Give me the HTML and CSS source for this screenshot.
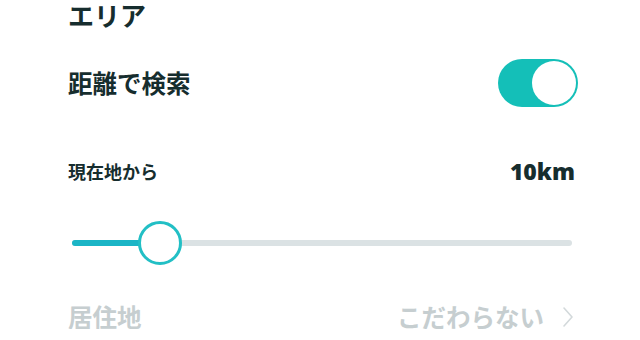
FILE: index.html
```html
<!DOCTYPE html>
<html lang="ja">
<head>
<meta charset="UTF-8" />
<meta name="viewport" content="width=device-width, initial-scale=1" />
<title>エリア</title>
<link rel="stylesheet" href="styles.css">
</head>
<body>
<div class="area">
  <h2 class="area-title">エリア</h2>

  <div class="row row-switch">
    <span class="label">距離で検索</span>
    <div class="toggle is-on" role="switch" aria-checked="true" aria-label="距離で検索">
      <span class="toggle-knob"></span>
    </div>
  </div>

  <div class="row row-distance">
    <span class="label-small">現在地から</span>
    <span class="distance">10km</span>
  </div>

  <div class="slider" aria-label="距離">
    <div class="slider-track">
      <div class="slider-fill" style="width: 17.6%"></div>
      <span class="slider-thumb" style="left: 17.6%"></span>
    </div>
  </div>

  <div class="row row-home">
    <span class="label muted">居住地</span>
    <span class="value muted">こだわらない
      <svg class="chevron" width="12" height="22" viewBox="0 0 12 22" aria-hidden="true">
        <polyline points="2,2 10,11 2,20" fill="none" stroke="#d3d9db" stroke-width="1.6" stroke-linecap="round" stroke-linejoin="round"/>
      </svg>
    </span>
  </div>
</div>
</body>
</html>
```

FILE: styles.css
```css
:root {
  --text-dark: #162d2e;
  --text-muted: #c6ced0;
  --teal: #14bfb8;
  --teal-slider: #1bb5c6;
  --thumb-border: #22bfc5;
  --track-bg: #dbe2e4;
  --font-jp: "Noto Sans CJK JP", "Noto Sans", sans-serif;
}

* {
  box-sizing: border-box;
}

body {
  margin: 0;
  background: #ffffff;
  color: var(--text-dark);
  font-family: var(--font-jp);
}

.area {
  padding: 0 62px 0 68px;
}

.area-title {
  margin: 0;
  font-size: 26px;
  line-height: 30px;
  font-weight: 700;
}

.row {
  display: flex;
  justify-content: space-between;
  align-items: center;
}

.row-switch {
  margin-top: 29px;
  height: 48px;
}

.label {
  font-size: 24.5px;
  line-height: 24px;
  font-weight: 700;
}

.label-small {
  font-size: 18px;
  line-height: 24px;
  font-weight: 700;
}

.toggle {
  width: 80px;
  height: 48px;
  border-radius: 24px;
  background: var(--teal);
  padding: 2px;
  display: flex;
  justify-content: flex-end;
}

.toggle-knob {
  width: 44px;
  height: 44px;
  border-radius: 50%;
  background: #ffffff;
}

.row-distance {
  margin-top: 52px;
  height: 24px;
}

.distance {
  font-family: "Open Sans", "Liberation Sans", sans-serif;
  font-size: 23px;
  font-weight: 800;
  line-height: 24px;
  margin-right: 3px;
}

.slider {
  margin: 38px 6px 0 4px;
  height: 44px;
  display: flex;
  align-items: center;
}

.slider-track {
  position: relative;
  width: 100%;
  height: 6px;
  border-radius: 3px;
  background: var(--track-bg);
}

.slider-fill {
  height: 100%;
  border-radius: 3px;
  background: var(--teal-slider);
}

.slider-thumb {
  position: absolute;
  top: 50%;
  width: 44px;
  height: 44px;
  margin: -22px 0 0 -22px;
  border-radius: 50%;
  border: 3px solid var(--thumb-border);
  background: #ffffff;
}

.row-home {
  margin-top: 40px;
  height: 24px;
}

.muted {
  color: var(--text-muted);
}

.value {
  display: flex;
  align-items: center;
  gap: 18px;
  font-size: 24.5px;
  line-height: 24px;
  font-weight: 700;
  margin-right: 4px;
}
```
